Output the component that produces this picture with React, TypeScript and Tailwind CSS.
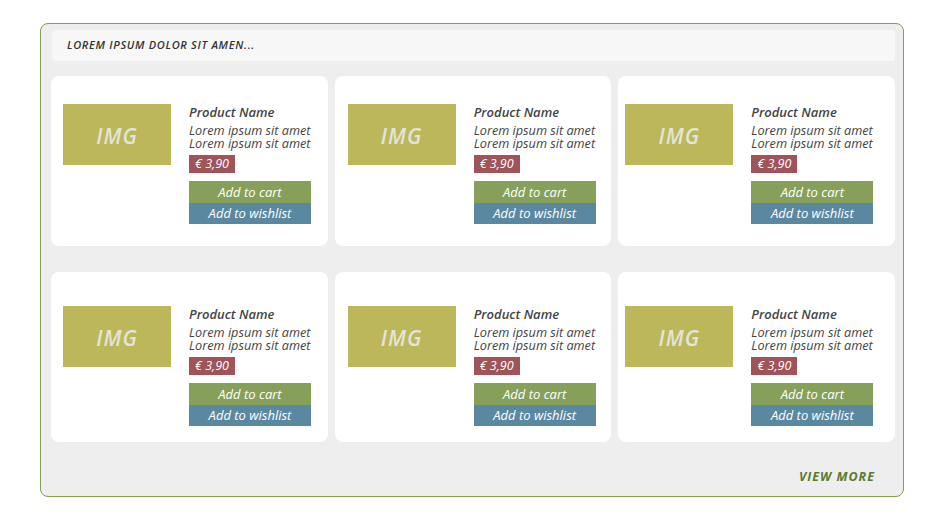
const products = [
  { pad: 'pl-[12px]' },
  { pad: 'pl-[13px]' },
  { pad: 'pl-[7px]' },
];

function ProductCard({ pad, top }: { pad: string; top: string }) {
  return (
    <div className={`h-[170px] rounded-[8px] bg-white flex items-start ${pad} ${top}`}>
      <div className="w-[108px] h-[61px] shrink-0 bg-[#bbb75a] flex items-center justify-center">
        <span className="mt-[5px] text-[21px] font-semibold italic tracking-[1px] text-[#e4e4d8]">IMG</span>
      </div>
      <div className="ml-[18px] w-[122px] shrink-0 flex flex-col items-start">
        <p className="text-[13px] leading-[16px] font-semibold italic text-[#444]">Product Name</p>
        <p className="mt-[4px] text-[12.7px] leading-[13px] italic text-[#444] whitespace-nowrap">
          Lorem ipsum sit amet
          <br />
          Lorem ipsum sit amet
        </p>
        <span className="mt-[5px] h-[18px] w-[46px] bg-[#9e5459] text-white text-[12.5px] italic leading-[18px] text-center">
          € 3,90
        </span>
        <button className="mt-[8px] h-[22px] w-[122px] bg-[#86a05a] text-white text-[13px] italic leading-[22px] text-center">
          Add to cart
        </button>
        <button className="h-[21px] w-[122px] bg-[#5a88a0] text-white text-[13px] italic leading-[21px] text-center">
          Add to wishlist
        </button>
      </div>
    </div>
  );
}

export default function App() {
  return (
    <div
      className="w-[940px] h-[520px] bg-white pt-[23px] pl-[40px]"
      style={{ fontFamily: '"Open Sans", "Liberation Sans", sans-serif' }}
    >
      <div className="w-[864px] h-[474px] rounded-[8px] border border-[#82a04e] bg-[#eeeeee] pt-[6px] pl-[10px] pr-[8px] flex flex-col">
        <div className="ml-px h-[31px] rounded-[4px] bg-[#f7f7f7] flex items-center pl-[15px]">
          <span className="text-[11px] font-semibold italic tracking-[0.7px] text-[#333]">
            LOREM IPSUM DOLOR SIT AMEN...
          </span>
        </div>

        <div className="mt-[15px] grid grid-cols-3 gap-[7px]">
          {products.map((p, i) => (
            <ProductCard key={i} pad={p.pad} top="pt-[28px]" />
          ))}
        </div>

        <div className="mt-[26px] grid grid-cols-3 gap-[7px]">
          {products.map((p, i) => (
            <ProductCard key={i} pad={p.pad} top="pt-[34px]" />
          ))}
        </div>

        <div className="flex justify-end pr-[20px] mt-[27px]">
          <a className="text-[12.5px] font-bold italic tracking-[1px] text-[#5b7a2e] leading-[16px]">VIEW MORE</a>
        </div>
      </div>
    </div>
  );
}
